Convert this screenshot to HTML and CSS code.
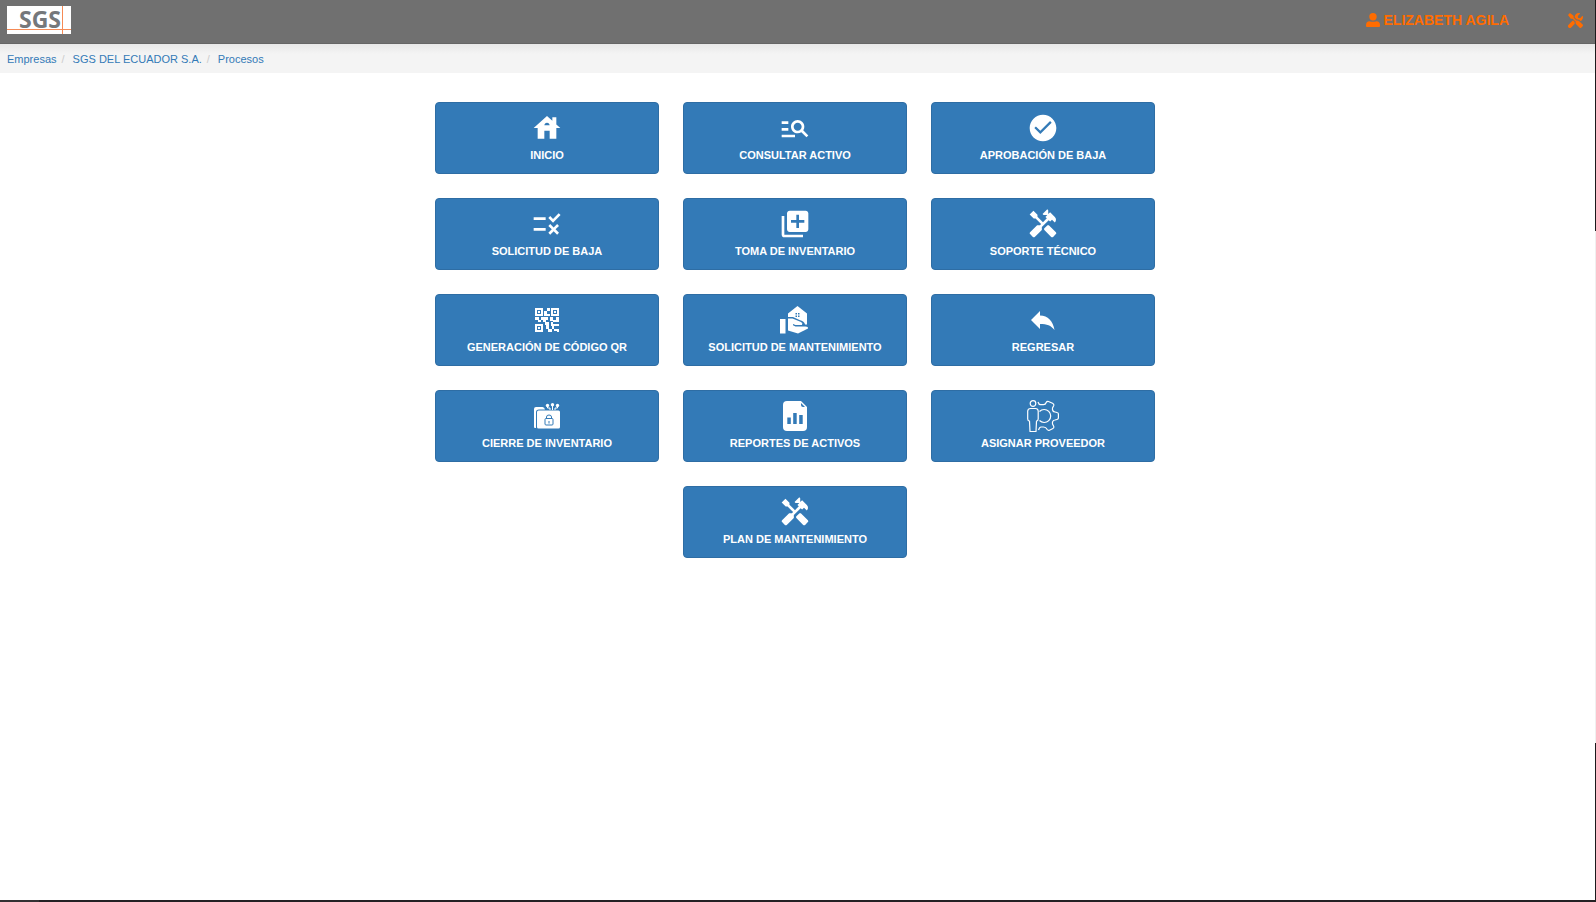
FILE: index.html
```html
<!DOCTYPE html>
<html lang="es">
<head>
  <meta charset="UTF-8">
  <meta name="viewport" content="width=device-width, initial-scale=1.0">
  <title>Procesos</title>
  <link rel="stylesheet" href="styles.css">
</head>
<body>
  <!-- Shared icons -->
  <svg class="sprite" aria-hidden="true">
    <symbol id="icon-tools" viewBox="0 0 24 24">
      <path d="M21.67 18.17l-5.3-5.3h-.99l-2.54 2.54v.99l5.3 5.3c.39.39 1.02.39 1.41 0l2.12-2.12c.39-.38.39-1.02 0-1.41z"/>
      <path d="M17.34 10.19l1.41-1.41 2.12 2.12c1.17-1.17 1.17-3.07 0-4.24l-3.54-3.54-1.41 1.41V1.71L15.22 1l-3.54 3.54.71.71h2.83l-1.41 1.41 1.06 1.06-2.89 2.89-4.13-4.13V5.06L4.83 2.04 2 4.87 5.03 7.9h1.41l4.13 4.13-.85.85H7.6l-5.3 5.3c-.39.39-.39 1.02 0 1.41l2.12 2.12c.39.39 1.02.39 1.41 0l5.3-5.3v-2.12l5.15-5.15 1.05 1.05z"/>
    </symbol>
  </svg>

  <div class="page">
    <div class="content">
      <header class="navbar">
        <a class="logo" href="#" aria-label="SGS">
          <svg width="64" height="28" viewBox="0 0 64 28">
            <rect width="64" height="28" fill="#fff"/>
            <text class="logo-text" x="12" y="22">SGS</text>
            <path d="M0 23.5H64M55.5 0V28" stroke="#f58a55" stroke-width="1"/>
          </svg>
        </a>
        <nav class="navbar-right">
          <a class="user" href="#">
            <svg width="14" height="14" viewBox="0 0 14 14">
              <circle cx="7" cy="3.7" r="3.7"/>
              <path d="M1 14Q0 14 0 13V12Q0 8.4 3.6 8.2Q7 9.4 10.4 8.2Q14 8.4 14 12V13Q14 14 13 14z"/>
            </svg>
            ELIZABETH AGILA
          </a>
          <a class="settings" href="#" aria-label="Herramientas">
            <svg width="15" height="15" viewBox="0 0 512 512">
              <path d="M501.1 395.7L384 278.6c-23.1-23.1-57.6-27.6-85.4-13.9L192 158.1V96L64 0 0 64l96 128h62.1l106.6 106.6c-13.6 27.8-9.2 62.3 13.9 85.4l117.1 117.1c14.6 14.6 38.2 14.6 52.7 0l52.7-52.7c14.5-14.6 14.5-38.2 0-52.7zM331.7 225c28.3 0 54.9 11 74.9 31l19.4 19.4c15.8-6.9 30.8-16.5 43.8-29.5 37.1-37.1 49.7-89.3 37.9-136.7-2.2-9-13.5-12.1-20.1-5.5l-74.4 74.4-67.9-11.3L334 98.9l74.4-74.4c6.6-6.6 3.4-17.9-5.7-20.2-47.4-11.7-99.6.9-136.6 37.9-28.5 28.5-41.9 66.1-41.2 103.6l82.1 82.1c8.1-1.9 16.5-2.9 24.7-2.9zm-103.9 82l-56.7-56.7L18.7 402.8c-25 25-25 65.5 0 90.5s65.5 25 90.5 0l123.6-123.6c-7.6-19.9-9.9-41.6-5-62.7z"/>
            </svg>
          </a>
        </nav>
      </header>

      <ol class="breadcrumb">
        <li><a href="#">Empresas</a></li>
        <li><a href="#">SGS DEL ECUADOR S.A.</a></li>
        <li><a href="#">Procesos</a></li>
      </ol>

      <main class="menu">
        <button class="btn" type="button">
          <svg class="icon" viewBox="0 0 24 24"><path d="M19 9.3V4h-3v2.6L12 3 2 12h3v8h5v-6h4v6h5v-8h3l-3-2.7zm-9 .7c0-1.1.9-2 2-2s2 .9 2 2h-4z"/></svg>
          INICIO
        </button>
        <button class="btn" type="button">
          <svg class="icon" viewBox="0 0 24 24"><path d="M7 9H2V7h5v2zm0 3H2v2h5v-2zm13.59 7l-3.83-3.83c-.8.52-1.74.83-2.76.83-2.76 0-5-2.24-5-5s2.24-5 5-5 5 2.24 5 5c0 1.02-.31 1.96-.83 2.75L22 17.59 20.59 19zM17 11c0-1.65-1.35-3-3-3s-3 1.35-3 3 1.35 3 3 3 3-1.35 3-3zM2 19h10v-2H2v2z"/></svg>
          CONSULTAR ACTIVO
        </button>
        <button class="btn" type="button">
          <svg class="icon" viewBox="0 0 24 24"><path d="M12 2C6.48 2 2 6.48 2 12s4.48 10 10 10 10-4.48 10-10S17.52 2 12 2zm-2 14.500l-4.500-4.500 1.200-1.200L10 14.100l7.300-7.300L18.500 8l-8.500 8.500z"/></svg>
          APROBACIÓN DE BAJA
        </button>
        <button class="btn" type="button">
          <svg class="icon" viewBox="0 0 24 24"><path d="M16.54 11L13 7.46l1.41-1.41 2.12 2.12 4.24-4.24 1.41 1.41L16.54 11zM11 7H2v2h9V7zm10 6.41L19.59 12 17 14.59 14.41 12 13 13.41 15.59 16 13 18.59 14.41 20 17 17.41 19.59 20 21 18.59 18.41 16 21 13.41zM11 15H2v2h9v-2z"/></svg>
          SOLICITUD DE BAJA
        </button>
        <button class="btn" type="button">
          <svg class="icon" viewBox="0 0 24 24"><path d="M4 6H2v14c0 1.1.9 2 2 2h14v-2H4V6zm16-4H8c-1.1 0-2 .9-2 2v12c0 1.1.9 2 2 2h12c1.1 0 2-.9 2-2V4c0-1.1-.9-2-2-2zm-1 9h-4v4h-2v-4H9V9h4V5h2v4h4v2z"/></svg>
          TOMA DE INVENTARIO
        </button>
        <button class="btn" type="button">
          <svg class="icon"><use href="#icon-tools"/></svg>
          SOPORTE TÉCNICO
        </button>
        <button class="btn" type="button">
          <svg class="icon" viewBox="0 0 32 32">
            <path fill-rule="evenodd" d="M4 4h8v8H4zM6 6v4h4V6zM20 4h8v8h-8zM22 6v4h4V6zM4 20h8v8H4zM6 22v4h4v-4z"/>
            <path d="M7 7h2v2H7zM23 7h2v2h-2zM7 23h2v2H7zM16 4h3v3h-3zM13 7h3v5h-3zM16 10h3v2h-3zM4 13h4v3H4zM7 16h3v2H7zM10 13h7v3h-7zM12 16h3v2h-3zM19 13h3v4h-3zM25 13h3v5h-3zM22 16h3v2h-3zM14 18h4v3h-4zM15 21h3v4h-3zM20 18h2v4h-2zM22 20h6v2h-6zM17 25h4v3h-4zM21 22h2v3h-2zM23 25h5v3h-2v-1h-3z"/>
          </svg>
          GENERACIÓN DE CÓDIGO QR
        </button>
        <button class="btn" type="button">
          <svg class="icon" viewBox="0 0 32 32">
            <path fill-rule="evenodd" d="M9 9.5L18.5 2 28 9.5V20.5H26Q25.5 17 20.5 16L14 13H9zM16.5 9h1.5v1.5h-1.5zM19 9h1.5v1.5H19zM16.5 11.5h1.5V13h-1.5zM19 11.5h1.5V13H19z"/>
            <path d="M1 15h5.500v14.500H1zM9 14.500h4.500L22 18Q24.200 19.200 23 21H16.500L14 20v1.200l2.500 1.300H25Q29.500 22 29 24.500L19 29.500 9 26.500z"/>
          </svg>
          SOLICITUD DE MANTENIMIENTO
        </button>
        <button class="btn" type="button">
          <svg class="icon" viewBox="0 0 32 32"><path d="M4 16L13 7V11.500C21 11.500 26 17 27.500 26C24 21.500 20 20 13 20V25z"/></svg>
          REGRESAR
        </button>
        <button class="btn" type="button">
          <svg class="icon" viewBox="0 0 32 32">
            <path d="M3 27V9Q3 7 5 7H11.5Q13.5 7 14 9.5H8Q5 9.5 5 12V28H4Q3 28 3 27z"/>
            <rect x="6" y="10.5" width="23" height="18" rx="1.5"/>
            <g fill="none" stroke="#fff" stroke-width="1">
              <path d="M16.5 5.5V8H19V10M21.5 5V10M26.5 5.5V8H24V10"/>
            </g>
            <circle cx="16.5" cy="5.5" r="1.7"/><circle cx="21.5" cy="4.8" r="1.7"/><circle cx="26.5" cy="5.5" r="1.7"/>
            <g fill="none" stroke="#337ab7">
              <rect x="14" y="18.5" width="8" height="6.5" rx="1"/>
              <path d="M15.5 18.5V17Q15.5 15 18 15T20.500 17V18.500M18 21V23.500"/>
            </g>
          </svg>
          CIERRE DE INVENTARIO
        </button>
        <button class="btn" type="button">
          <svg class="icon" viewBox="0 0 32 32">
            <path d="M8 1H22L28 7V27Q28 31 24 31H8Q4 31 4 27V5Q4 1 8 1z"/>
            <path fill="#337ab7" d="M22 3L26 7H24Q22 7 22 5zM8.3 17.5h3.500v6.500H8.300zM14.200 13h3.500v11h-3.500zM20.200 15h3.500v9h-3.500z"/>
          </svg>
          REPORTES DE ACTIVOS
        </button>
        <button class="btn" type="button">
          <svg class="icon" viewBox="0 0 32 32">
            <g fill="none" stroke="#fff" stroke-width="1.2" stroke-linejoin="round">
              <circle cx="6" cy="3.5" r="2.8"/>
              <path d="M3.5 8.500H8.500Q11 8.500 11.200 11V19Q11 21 9.500 21L9 31.500H3L2.500 21Q.8 21 .7 19V11Q1 8.500 3.500 8.500z"/>
              <path d="M11 2Q11.800 4.700 13.500 4.700H16.500Q18.500 4.700 19.200 2.500Q19.700 1.300 21.500 1.500L25.500 3.200Q27.300 4 26.800 5.500L25.500 8Q25 11.500 28 12L30 12.500Q31.400 12.800 31.400 14V18Q31.400 19.200 30 19.500L28 20Q25 20.500 25.500 24L26.800 26.500Q27.300 28 25.500 28.800L22.500 30.200Q21 30.700 20.200 29.500Q19 27 16.500 27H14Q12.500 27 11.500 30"/>
              <path d="M12.500 11.500A6.500 6.500 0 1 1 12.500 20.500"/>
            </g>
          </svg>
          ASIGNAR PROVEEDOR
        </button>
        <button class="btn btn-last" type="button">
          <svg class="icon"><use href="#icon-tools"/></svg>
          PLAN DE MANTENIMIENTO
        </button>
      </main>
    </div>
    <div class="edge"></div>
  </div>
  <div class="taskbar"></div>
</body>
</html>
```

FILE: styles.css
```css
* {
  box-sizing: border-box;
}

body {
  display: flex;
  flex-direction: column;
  min-height: 100vh;
  margin: 0;
  font-family: "Liberation Sans", Arial, sans-serif;
  font-size: 11px;
  background-color: #fff;
}

a {
  color: #337ab7;
  text-decoration: none;
}

.sprite {
  display: none;
}

.page {
  display: flex;
  flex: 1;
}

.content {
  flex: 1;
}

.edge {
  width: 1px;
  background: linear-gradient(#1c1a1c 231px, #f0f0f0 231px, #f0f0f0 calc(100% - 157px), #1c1a1c calc(100% - 157px));
}

.taskbar {
  height: 2px;
  background: linear-gradient(to right, #333133 39px, #242124 39px);
}

/* Top bar */
.navbar {
  display: flex;
  justify-content: space-between;
  align-items: flex-start;
  height: 44px;
  padding: 6px 12px 0 7px;
  background-color: #707070;
  border-bottom: 1px solid #666;
}

.logo svg {
  display: block;
  overflow: visible;
}

.logo-text {
  font-family: "Open Sans", "Noto Sans", sans-serif;
  font-size: 23px;
  font-weight: bold;
  fill: #75787b;
}

.navbar-right {
  display: flex;
  align-items: center;
  gap: 59px;
  height: 28px;
}

.navbar-right a {
  display: flex;
  align-items: center;
  gap: 4px;
  font-size: 14px;
  font-weight: bold;
  color: #ff6c00;
}

.navbar-right svg {
  fill: #ff6c00;
}

/* Breadcrumb */
.breadcrumb {
  display: flex;
  height: 29px;
  margin: 0;
  padding: 0 7px;
  line-height: 30px;
  list-style: none;
  background: linear-gradient(#e8e8e8, #f4f4f4 10px);
}

.breadcrumb li + li::before {
  content: "/";
  padding: 0 8px 0 5px;
  color: #ccc;
}

/* Process buttons */
.menu {
  display: grid;
  grid-template-columns: repeat(3, 224px);
  justify-content: center;
  gap: 24px;
  padding: 29px 5px 24px 0;
}

.btn {
  display: flex;
  flex-direction: column;
  align-items: center;
  gap: 2px;
  padding: 9px;
  font-family: inherit;
  font-size: 11px;
  font-weight: bold;
  line-height: 18px;
  color: #fff;
  background-color: #337ab7;
  border: 1px solid #2e6da4;
  border-radius: 4px;
  cursor: pointer;
}

.btn:hover {
  background-color: #286090;
}

.btn-last {
  grid-column: 2;
}

.icon {
  width: 32px;
  height: 32px;
  fill: #fff;
}
```
